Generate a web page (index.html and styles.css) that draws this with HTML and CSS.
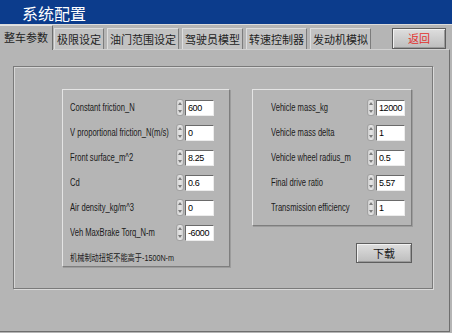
FILE: index.html
```html
<!DOCTYPE html>
<html>
<head lang="zh">
    <meta charset="UTF-8">
    <title>系统配置</title>
    <link rel="stylesheet" href="styles.css">
</head>
<body>
<div id="titlebar">系统配置</div>
<div id="tabbar">
    <div class="tab active">整车参数</div>
    <div class="tab">极限设定</div>
    <div class="tab">油门范围设定</div>
    <div class="tab">驾驶员模型</div>
    <div class="tab">转速控制器</div>
    <div class="tab">发动机模拟</div>
    <span class="btn back">返回</span>
</div>
<div id="tabbody">
    <div id="panel">
        <div class="group left">
            <div class="row"><span class="label">Constant friction_N</span><span class="spin"></span><span class="num">600</span></div>
            <div class="row"><span class="label">V proportional friction_N(m/s)</span><span class="spin"></span><span class="num">0</span></div>
            <div class="row"><span class="label">Front surface_m^2</span><span class="spin"></span><span class="num">8.25</span></div>
            <div class="row"><span class="label">Cd</span><span class="spin"></span><span class="num">0.6</span></div>
            <div class="row"><span class="label">Air density_kg/m^3</span><span class="spin"></span><span class="num">0</span></div>
            <div class="row"><span class="label">Veh MaxBrake Torq_N-m</span><span class="spin"></span><span class="num">-6000</span></div>
            <div class="note"><span>机械制动扭矩不能高于-1500N-m</span></div>
        </div>
        <div class="rightcol">
            <div class="group right">
                <div class="row"><span class="label">Vehicle mass_kg</span><span class="spin"></span><span class="num">12000</span></div>
                <div class="row"><span class="label">Vehicle mass delta</span><span class="spin"></span><span class="num">1</span></div>
                <div class="row"><span class="label">Vehicle wheel radius_m</span><span class="spin"></span><span class="num">0.5</span></div>
                <div class="row"><span class="label">Final drive ratio</span><span class="spin"></span><span class="num">5.57</span></div>
                <div class="row"><span class="label">Transmission efficiency</span><span class="spin"></span><span class="num">1</span></div>
            </div>
            <span class="btn download">下载</span>
        </div>
    </div>
</div>
</body>
</html>
```

FILE: styles.css
```css
*{
    margin: 0;
    padding: 0;
    box-sizing: border-box;
}
body{
    width: 452px;
    height: 333px;
    overflow: hidden;
    background: #b5b5b5;
    font-family: "Liberation Sans", "Noto Sans CJK SC", sans-serif;
    color: #111;
}
#titlebar{
    height: 24px;
    line-height: 26px;
    padding-left: 22px;
    background: #0c3c8c;
    color: #fff;
    font-size: 16px;
    font-family: "Noto Sans CJK SC", sans-serif;
}
#tabbar{
    height: 25px;
    border-top: 1px solid #dcdcdc;
    display: flex;
    align-items: flex-end;
    gap: 3px;
    font-family: "Noto Sans CJK SC", sans-serif;
    font-size: 11px;
}
.tab{
    height: 21px;
    line-height: 20px;
    padding: 0 2px;
    background: #c2c2c2;
    border-left: 1px solid #dedede;
    border-top: 1px solid #dedede;
    border-right: 1px solid #7c7c7c;
    white-space: nowrap;
    color: #222;
}
.tab.active{
    height: 25px;
    line-height: 22px;
    padding: 0 4px;
    margin-bottom: -1px;
    margin-right: -2px;
    background: #b5b5b5;
    border-left: none;
    border-top: 1px solid #e2e2e2;
    border-right: 1px solid #6e6e6e;
    position: relative;
    z-index: 1;
}
.btn{
    display: block;
    height: 21px;
    line-height: 19px;
    text-align: center;
    font-family: "Noto Sans CJK SC", sans-serif;
    font-size: 11px;
    background: linear-gradient(#dedede, #bdbdbd);
    border: 1px solid #5e5e5e;
    box-shadow: inset 1px 1px 0 #f2f2f2, inset -1px -1px 0 #9a9a9a;
}
.back{
    width: 54px;
    margin-left: auto;
    margin-right: 6px;
    color: #e3302c;
}
#tabbody{
    width: 450px;
    height: 283px;
    border-top: 1px solid #d2d2d2;
    border-right: 1px solid #6e6e6e;
    border-bottom: 1px solid #6e6e6e;
    padding: 16px 0 0 13px;
}
#panel{
    width: 420px;
    height: 223px;
    border: 1px solid #7a7a7a;
    box-shadow: 1px 1px 0 #dadada, inset 1px 1px 0 #d6d6d6;
    padding: 22px 0 0 48px;
    display: flex;
    align-items: flex-start;
}
.group{
    border: 1px solid;
    border-color: #e4e4e4 #7e7e7e #7e7e7e #e4e4e4;
    box-shadow: 1px 1px 0 #9c9c9c;
    display: flex;
    flex-direction: column;
    gap: 8px;
    padding-top: 9px;
}
.group.left{
    width: 168px;
    height: 178px;
    padding-left: 7px;
}
.rightcol{
    margin-left: 22px;
    display: flex;
    flex-direction: column;
    align-items: flex-end;
}
.group.right{
    width: 160px;
    height: 137px;
    padding-left: 18px;
}
.row{
    height: 17px;
    display: flex;
    align-items: center;
}
.label{
    width: 106px;
    font-size: 10px;
    white-space: nowrap;
    color: #1a1a1a;
    transform: scaleX(0.76);
    transform-origin: left center;
}
.right .label{
    width: 96px;
}
.spin{
    width: 8px;
    height: 17px;
    margin-right: 1px;
    display: flex;
    flex-direction: column;
    align-items: center;
    justify-content: space-around;
    background: linear-gradient(90deg, #cfcfcf, #e6e6e6, #cfcfcf);
    border-radius: 3px;
    border: 1px solid #a2a2a2;
}
.spin::before{
    content: "";
    border-left: 2px solid transparent;
    border-right: 2px solid transparent;
    border-bottom: 3px solid #7a7a7a;
}
.spin::after{
    content: "";
    border-left: 2px solid transparent;
    border-right: 2px solid transparent;
    border-top: 3px solid #7a7a7a;
}
.num{
    width: 29px;
    height: 16px;
    line-height: 14px;
    padding-left: 2px;
    background: #fff;
    border: 1px solid;
    border-color: #6a6a6a #ececec #ececec #6a6a6a;
    font-size: 9px;
    letter-spacing: -0.4px;
    color: #000;
}
.note{
    margin-top: -2px;
    white-space: nowrap;
}
.note span{
    display: inline-block;
    font-size: 9px;
    color: #1a1a1a;
    transform: scaleX(0.8);
    transform-origin: left center;
}
.download{
    width: 56px;
    height: 20px;
    margin-top: 17px;
    color: #1a1a1a;
}
```
